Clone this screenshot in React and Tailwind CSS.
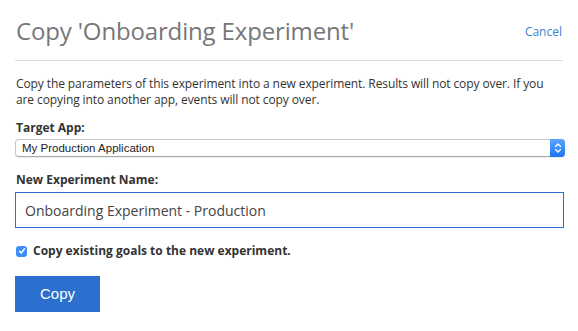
import React, { useState } from 'react';

const App = () => {
    const [app, setApp] = useState('My Production Application');
    const [name, setName] = useState('Onboarding Experiment - Production');
    const [copyGoals, setCopyGoals] = useState(true);

    return (
        <div className="w-[578px] h-[331px] bg-white px-[15px] pt-4 font-['Open_Sans',sans-serif] text-[#333]">
            {/* Header */}
            <div className="flex items-center justify-between h-[30px] pb-[14px] box-content border-b border-[#dcdcdc]">
                <h1 className="text-[24px] leading-[30px] text-[#777] font-normal pl-px tracking-[-0.15px]">
                    Copy 'Onboarding Experiment'
                </h1>
                <button className="text-[12px] text-[#3d7fd6] pr-px leading-4 mt-px">Cancel</button>
            </div>

            {/* Description */}
            <p className="mt-[15px] text-[12px] leading-4 pl-px tracking-[-0.1px]">
                Copy the parameters of this experiment into a new experiment. Results will not copy over. If you
                are copying into another app, events will not copy over.
            </p>

            {/* Target App */}
            <label className="block mt-3 text-[12px] leading-4 font-bold pl-px">Target App:</label>
            <div className="relative mt-[3px] h-[18px] w-[550px]">
                <select
                    value={app}
                    onChange={(e) => setApp(e.target.value)}
                    className="block appearance-none w-full h-[18px] bg-white border border-[#c6c6c6] border-b-[#aaa] rounded-[4px] pl-[6px] py-0 text-[11.5px] leading-[16px] text-[#222] font-['Liberation_Sans',sans-serif] shadow-[0_1px_1px_rgba(0,0,0,0.08)] outline-none"
                >
                    <option>My Production Application</option>
                    <option>My Staging Application</option>
                </select>
                <div className="absolute right-0 top-0 h-[18px] w-[15px] rounded-r-[4px] bg-gradient-to-b from-[#5aa6ff] to-[#1a73f0] flex items-center justify-center pointer-events-none">
                    <svg width="8" height="12" viewBox="0 0 8 12" fill="none" stroke="white" strokeWidth="1.3" strokeLinecap="round" strokeLinejoin="round">
                        <path d="M1.5 4.5 L4 2 L6.5 4.5" />
                        <path d="M1.5 7.5 L4 10 L6.5 7.5" />
                    </svg>
                </div>
            </div>

            {/* Experiment Name */}
            <label className="block mt-[15px] text-[12px] leading-4 font-bold pl-px">New Experiment Name:</label>
            <input
                value={name}
                onChange={(e) => setName(e.target.value)}
                className="block mt-1 w-[549px] h-9 border-[1.5px] border-[#2c6fd1] px-[9px] text-[14px] text-[#444] outline-none"
            />

            {/* Copy goals */}
            <label className="flex items-center gap-[6px] mt-[15px] h-4 pl-px text-[12px] font-bold cursor-pointer">
                <span
                    onClick={() => setCopyGoals(!copyGoals)}
                    className={`w-[11px] h-[11px] rounded-[3px] flex items-center justify-center ${copyGoals ? 'bg-[#3b8ff6]' : 'bg-white border border-[#aaa]'}`}
                >
                    {copyGoals && (
                        <svg width="8" height="8" viewBox="0 0 8 8" fill="none" stroke="white" strokeWidth="1.4" strokeLinecap="round" strokeLinejoin="round">
                            <path d="M1.5 4.3 L3.2 6 L6.5 1.8" />
                        </svg>
                    )}
                </span>
                Copy existing goals to the new experiment.
            </label>

            {/* Submit */}
            <button className="block mt-[17px] w-[85px] h-9 bg-[#2b6fcf] text-white text-[15px] font-['Liberation_Sans',sans-serif]">
                Copy
            </button>
        </div>
    );
};

export default App;
